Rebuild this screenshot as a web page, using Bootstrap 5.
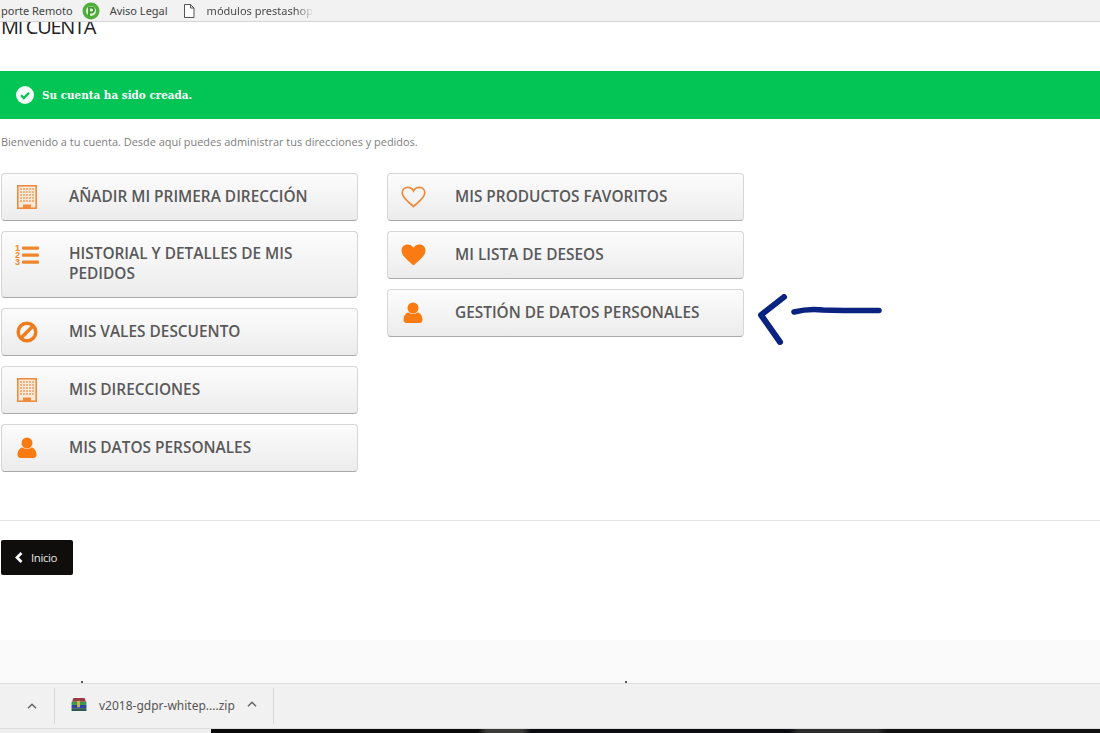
<!DOCTYPE html>
<html lang="es">
<head>
<meta charset="utf-8">
<title>Mi cuenta</title>
<link href="https://cdn.jsdelivr.net/npm/bootstrap@5.3.0/dist/css/bootstrap.min.css" rel="stylesheet">
<style>
html,body{height:733px;overflow:hidden;background:#fff}
body{font-family:"Open Sans",sans-serif;color:#777;display:flex;flex-direction:column;position:relative}
.bm-bar{height:22px;background:#f2f2f2;border-bottom:1px solid #d4d4d4;font-family:"Noto Sans","Open Sans",sans-serif;font-size:11px;color:#444;position:relative;z-index:2;flex:none;white-space:nowrap;padding-left:1px;line-height:14px}
.bm-fade{background:linear-gradient(90deg,#444 85%,#ddd);-webkit-background-clip:text;background-clip:text;color:transparent}
.main-area{height:618px;flex:none;padding-left:1px;overflow:hidden}
.page-h{font-family:"Open Sans",sans-serif;font-size:20px;line-height:24px;font-weight:400;color:#222;margin:-7px 0 0 0;height:24px;text-transform:uppercase;letter-spacing:-1.3px}
.ok-box{height:48px;margin:32px 0 0 -1px;background:#02c555;color:#fff;font-family:"DejaVu Serif",serif;font-weight:700;font-size:10.4px;padding-left:16px;gap:8px;border:0;border-radius:0}
.ok-box span{position:relative;top:.5px}
.intro{font-size:10.95px;line-height:16px;margin:15px 0 0 0;color:#7d7d7d}
.acct-grid{margin-top:23px;gap:29px}
.acct-col{width:357px;gap:10px}
.acct-btn{display:flex;align-items:center;min-height:48px;background:linear-gradient(#fcfcfc,#ececec);border:1px solid #d6d6d6;border-bottom-color:#a9a9a9;border-radius:4px;color:#595959;font-weight:600;font-size:15.4px;line-height:19.5px;text-decoration:none;text-transform:uppercase;padding:7px 30px 8px 0}
.acct-btn.tall{align-items:flex-start;min-height:67px;padding-top:12px}
.ic-slot{width:67px;flex:none;display:flex;justify-content:center;padding-right:17px}
.rule-line{margin:48px 0 0 -1px;border-top:1px solid #e4e4e4;opacity:1}
.back-btn{display:inline-flex;align-items:center;width:72px;height:35px;margin-top:19px;background:#0f0e0d;color:#e4e4e4;border-radius:2px;font-size:11.5px;padding:0 0 0 14px;gap:8px;text-decoration:none;letter-spacing:-.4px}
.foot-band{height:43px;background:#fafafa;flex:none;position:relative}
.foot-dot{position:absolute;top:41px;width:2px;height:2px;background:#555}
.dl-bar{height:46px;flex:none;background:#f1f1f1;border-top:1px solid #dedede;border-bottom:1px solid #ddd;font-family:"Noto Sans",sans-serif;font-size:12px;color:#555}
.dl-sep{width:1px;height:36px;background:#d8d8d8}
.dl-strip{height:4px;flex:none;background:#efefef;padding-left:211px}
.dl-strip div{height:4px;background:linear-gradient(90deg,#0a0a0a 0 30%,#3a3a38 31% 35%,#0b0b12 36% 65%,#2b2b2b 66% 75%,#111 76%)}
.mark-arrow{position:absolute;left:755px;top:292px;z-index:3;filter:blur(.6px)}
</style>
</head>
<body>
<div class="bm-bar d-flex align-items-center">
  <span>porte Remoto</span>
  <svg width="18" height="18" viewBox="0 0 18 18" style="margin-left:9px"><circle cx="9" cy="9" r="8.500" fill="#4fae3c"/><circle cx="9" cy="9" r="5" fill="#dff2d8"/><path d="M7 14V5.500h2.500a2.500 2.500 0 0 1 0 5H7" fill="none" stroke="#3c9a2c" stroke-width="1.800"/></svg>
  <span style="margin-left:10px">Aviso Legal</span>
  <svg width="12" height="14" viewBox="0 0 12 14" style="margin-left:15px"><path d="M1.500.5h6l3.500 3.500v9.500H1.500zM7.500.5V4H11" fill="#fff" stroke="#555"/></svg>
  <span class="bm-fade" style="margin-left:12px;width:105px">módulos prestashop</span>
</div>

<main class="main-area">
  <h1 class="page-h">Mi cuenta</h1>
  <div class="alert ok-box d-flex align-items-center mb-0" role="alert">
    <svg width="18" height="18" viewBox="0 0 18 18"><circle cx="9" cy="9" r="9" fill="#f4fff8"/><path d="M5 9.300l2.800 2.800L13 6.800" fill="none" stroke="#02c555" stroke-width="2.300"/></svg>
    <span>Su cuenta ha sido creada.</span>
  </div>
  <p class="intro">Bienvenido a tu cuenta. Desde aquí puedes administrar tus direcciones y pedidos.</p>

  <div class="acct-grid d-flex align-items-start">
    <div class="acct-col d-flex flex-column">
      <a class="acct-btn" href="#"><span class="ic-slot"><svg width="20" height="24" viewBox="0 0 20 24"><use href="#i-build"/></svg></span>Añadir mi primera dirección</a>
      <a class="acct-btn tall" href="#"><span class="ic-slot"><svg width="24" height="22" viewBox="0 0 24 22"><use href="#i-list"/></svg></span><span>Historial y detalles de mis pedidos</span></a>
      <a class="acct-btn" href="#"><span class="ic-slot"><svg width="22" height="22" viewBox="0 0 22 22"><circle cx="11" cy="11" r="8.800" fill="none" stroke="#f07c1c" stroke-width="3.400"/><path d="M5 17 17 5" stroke="#f07c1c" stroke-width="3.400"/></svg></span>Mis vales descuento</a>
      <a class="acct-btn" href="#"><span class="ic-slot"><svg width="20" height="24" viewBox="0 0 20 24"><use href="#i-build"/></svg></span>Mis direcciones</a>
      <a class="acct-btn" href="#"><span class="ic-slot"><svg width="20" height="21" viewBox="0 0 20 21"><use href="#i-user"/></svg></span>Mis datos personales</a>
    </div>
    <div class="acct-col d-flex flex-column">
      <a class="acct-btn" href="#"><span class="ic-slot"><svg width="25" height="22" viewBox="0 0 25 22"><path d="M12.500 20.500C8 16.500 1.200 12 1.200 6.800 1.200 3.500 3.700 1.300 6.600 1.300c2.500 0 4.700 1.200 5.900 3.500 1.200-2.300 3.400-3.500 5.900-3.500 2.900 0 5.400 2.200 5.400 5.500 0 5.200-6.800 9.700-11.300 13.700z" fill="none" stroke="#ed8a3c" stroke-width="1.700"/></svg></span>Mis productos favoritos</a>
      <a class="acct-btn" href="#"><span class="ic-slot"><svg width="25" height="22" viewBox="0 0 25 22"><path d="M12.500 21.500C8 17 .5 12.500.5 6.500.5 3 3.200.5 6.400.5c2.600 0 4.900 1.200 6.100 3.300C13.700 1.700 16 .5 18.600.5c3.200 0 5.900 2.500 5.900 6 0 6-7.500 10.500-12 15z" fill="#f97b12"/></svg></span>Mi lista de deseos</a>
      <a class="acct-btn" href="#"><span class="ic-slot"><svg width="20" height="21" viewBox="0 0 20 21"><use href="#i-user"/></svg></span>Gestión de datos personales</a>
    </div>
  </div>

  <hr class="rule-line">
  <a class="back-btn" href="#"><svg width="8" height="11" viewBox="0 0 8 11"><path d="M6.500 1 2 5.500 6.500 10" fill="none" stroke="#fff" stroke-width="2.800"/></svg><span>Inicio</span></a>
</main>

<div class="foot-band"><span class="foot-dot" style="left:81px"></span><span class="foot-dot" style="left:625px"></span></div>

<div class="dl-bar d-flex align-items-center">
  <svg class="d-block" width="10" height="6" viewBox="0 0 10 6" style="margin-left:27px"><path d="M1 5.300 5 1.300l4 4" fill="none" stroke="#666" stroke-width="1.500"/></svg>
  <span class="dl-sep" style="margin-left:17px"></span>
  <svg width="16" height="13" viewBox="0 0 16 14" style="margin:-4px 0 0 16px"><path d="M2 0h12l1.500 4H.500z" fill="#9c3a44"/><rect x="0" y="4" width="16" height="3.500" fill="#3c9a4c"/><rect x="0" y="7.500" width="16" height="3.500" fill="#3246a0"/><rect x="0" y="11" width="16" height="3" fill="#2a5a50"/><rect x="6" y="3" width="3" height="7" fill="#d6b24a"/></svg>
  <span style="margin-left:12px">v2018-gdpr-whitep....zip</span>
  <svg width="10" height="6" viewBox="0 0 10 6" style="margin-left:12px;margin-top:-4px"><path d="M1 5.300 5 1.300l4 4" fill="none" stroke="#666" stroke-width="1.500"/></svg>
  <span class="dl-sep" style="margin-left:16px"></span>
</div>
<div class="dl-strip"><div></div></div>

<svg class="mark-arrow" width="130" height="56" viewBox="0 0 130 56" fill="none" stroke="#0a2280" stroke-linecap="round" stroke-linejoin="round"><path d="M29 5 6 23 25 50" stroke-width="6"/><path d="M39 20c10-2.500 20-3 29-2 15 .5 34 .5 56 .5" stroke-width="5.500"/></svg>

<svg width="0" height="0" class="position-absolute">
  <defs>
    <pattern id="win" width="3" height="3" patternUnits="userSpaceOnUse"><rect width="2" height="2" fill="#f3b27d"/></pattern>
    <g id="i-build"><rect x=".8" y=".8" width="18.400" height="22.400" fill="#fbeadb" stroke="#f08a3c" stroke-width="1.600"/><rect x="3" y="3" width="14" height="14.500" fill="url(#win)"/><path d="M6 23v-3.500h8V23z" fill="#f08a3c"/></g>
    <g id="i-list"><rect x="7" y="2.500" width="17" height="3.200" rx="1" fill="#f0862a"/><rect x="7" y="9.500" width="17" height="3.200" rx="1" fill="#f0862a"/><rect x="7" y="16.500" width="17" height="3.200" rx="1" fill="#f0862a"/><text x="0" y="7" font-family="Liberation Sans" font-size="9" font-weight="700" fill="#f0862a">1</text><text x="0" y="14" font-family="Liberation Sans" font-size="9" font-weight="700" fill="#f0862a">2</text><text x="0" y="21" font-family="Liberation Sans" font-size="9" font-weight="700" fill="#f0862a">3</text></g>
    <g id="i-user"><circle cx="10" cy="6" r="5.500" fill="#f97b12"/><path d="M.5 18c0-5 3-7.500 5-7.500 1.500 1 3 1.500 4.500 1.500s3-.5 4.500-1.500c2 0 5 2.500 5 7.500 0 2-1.500 3-3 3H3.500c-1.500 0-3-1-3-3z" fill="#f97b12"/></g>
  </defs>
</svg>
<script src="https://cdn.jsdelivr.net/npm/bootstrap@5.3.0/dist/js/bootstrap.bundle.min.js"></script>
</body>
</html>
